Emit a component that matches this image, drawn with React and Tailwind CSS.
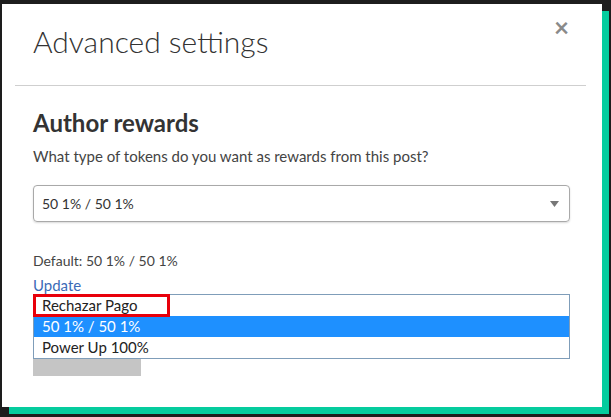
import React from 'react';

const options = ['Rechazar Pago', '50 1% / 50 1%', 'Power Up 100%'];

const App = () => {
  return (
    <div className="w-[611px] h-[417px] bg-[#1d1d1d] overflow-hidden pl-[2px] pt-[4px] font-['Lato',sans-serif]">
      {/* Modal */}
      <div className="w-[600px] h-[403px] bg-white shadow-[7px_7px_0_#05cc9e] flex flex-col">
        {/* Header */}
        <div className="flex items-start justify-between h-[81px]">
          <h1 className="pl-[31px] pt-[18px] text-[30px] leading-[38px] font-light text-[#333]">
            Advanced settings
          </h1>
          <button className="pr-[33px] pt-[10px] text-[26px] leading-[26px] font-bold text-[#8a8a8a]">
            ×
          </button>
        </div>
        <div className="ml-[13px] mr-[16px] border-t border-[#cfcfcf]" />

        {/* Body */}
        <div className="px-[31px] pt-[22px]">
          <h2 className="text-[24px] leading-[30px] font-bold text-[#333]">Author rewards</h2>
          <p className="mt-[8px] text-[15px] leading-[20px] text-[#444]">
            What type of tokens do you want as rewards from this post?
          </p>

          <div className="mt-[19px] w-[537px] h-[37px] border border-[#a9a9a9] rounded-[4px] shadow-[0_1px_2px_rgba(0,0,0,0.15)] flex items-center justify-between pl-[8px] pr-[10px]">
            <span className="text-[14px] text-[#333]">50 1% / 50 1%</span>
            <svg width="9" height="6" viewBox="0 0 9 6">
              <path d="M0 0H9L4.5 6Z" fill="#777" />
            </svg>
          </div>

          <p className="mt-[30px] text-[14px] leading-[18px] text-[#444]">Default: 50 1% / 50 1%</p>
          <a className="block mt-[6px] text-[15px] leading-[18px] text-[#3b6bb7]">Update</a>

          <div className="relative">
            <ul className="w-[537px] border border-[#7f9db9] bg-white">
              {options.map((o, i) => (
                <li
                  key={o}
                  className={`h-[21px] pl-[8px] text-[15px] leading-[21px] ${
                    i === 1 ? 'bg-[#1e90ff] text-white' : 'text-[#222]'
                  }`}
                >
                  {o}
                </li>
              ))}
            </ul>
            <div className="absolute left-0 top-0 w-[137px] h-[23px] border-[3px] border-[#e8000b]" />
            <div className="w-[108px] h-[17px] bg-[#c5c5c5]" />
          </div>
        </div>
      </div>
    </div>
  );
};

export default App;
